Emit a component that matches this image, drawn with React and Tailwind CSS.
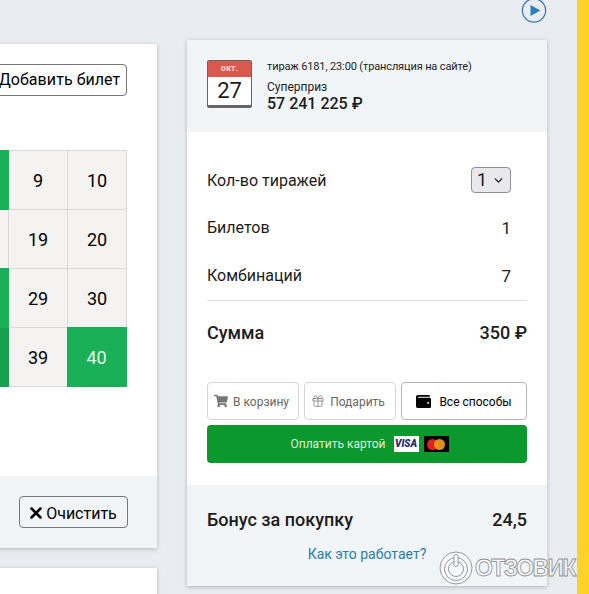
import { ChevronDown, Gift, X } from 'lucide-react';
import { FaShoppingCart, FaWallet } from 'react-icons/fa';

const rows = [
  [{ on: true }, { n: 9 }, { n: 10 }],
  [{}, { n: 19 }, { n: 20 }],
  [{ on: true }, { n: 29 }, { n: 30 }],
  [{ on: true, dark: true }, { n: 39 }, { n: 40, on: true }],
];

function Cell({ n, on, dark }) {
  let color = 'bg-[#f4f3f1] border-[#d9d9d9] text-black';
  if (on) color = '-mt-px -ml-px bg-[#19b057] border-[#19b057] text-[#e4f6ea]';
  if (dark) color = '-ml-px bg-[#17a04f] border-[#17a04f] text-[#e4f6ea]';
  return (
    <div className={`flex items-center justify-center border-r border-b pt-[2px] text-lg ${color}`}>{n}</div>
  );
}

function Row({ label, value, className }) {
  return (
    <div className={`flex items-center justify-between text-base ${className}`}>
      <span>{label}</span>
      <span className="pt-[1px] pr-[16px] text-[17px]">{value}</span>
    </div>
  );
}

function Logo() {
  return (
    <div className="absolute left-[439px] top-[551px] flex items-center">
      <svg width="34" height="34" viewBox="0 0 34 34" fill="none" stroke="#8f8f8f" strokeWidth="0.9">
        <circle cx="17" cy="17" r="16" fill="#ffffff" fillOpacity="0.35" />
        <circle cx="17" cy="18" r="11.5" />
        <circle cx="17" cy="18" r="7.5" />
        <rect x="15" y="3.5" width="4" height="12" rx="2" fill="#ffffff" />
      </svg>
      <span className="ml-[2px] font-['Liberation_Sans',sans-serif] text-[23px] font-bold leading-none tracking-[-1.6px] text-white/40 [-webkit-text-stroke:0.8px_#8f8f8f]">
        ОТЗОВИК
      </span>
    </div>
  );
}

export default function App() {
  return (
    <div className="relative flex h-[594px] w-[589px] overflow-hidden bg-[#e9edf1] font-['Roboto',sans-serif] text-[#1c1c1c]">
      {/* колонка с билетом */}
      <div className="ml-[-100px] flex w-[257px] shrink-0 flex-col pt-[44px]">
        <div className="flex h-[504px] shrink-0 flex-col bg-white shadow-[0_1px_4px_rgba(0,0,0,0.25)]">
          <div className="flex justify-end pr-[30px] pt-[20px]">
            <button className="h-[32px] w-[134px] rounded border border-[#777] bg-white pr-[1px] text-base tracking-[0.07px] whitespace-nowrap text-black">
              Добавить билет
            </button>
          </div>
          <div className="mt-[54px] flex justify-end pr-[30px]">
            <div className="grid grid-cols-[59px_59px_59px] grid-rows-[59px_59px_59px_59px] border-t border-l border-[#d9d9d9]">
              {rows.flat().map((c, i) => (
                <Cell key={i} {...c} />
              ))}
            </div>
          </div>
          <div className="mt-auto flex h-[72px] items-center justify-end bg-[#f1f5f8] pr-[29px]">
            <button className="flex h-[32px] w-[109px] items-center justify-center gap-[1px] rounded border border-[#777] pr-[3px] text-base text-black">
              <X size={18} strokeWidth={3.4} className="mt-[1px]" />
              <span className="pt-[4px]">Очистить</span>
            </button>
          </div>
        </div>
        <div className="mt-[20px] h-[60px] shrink-0 bg-white shadow-[0_1px_4px_rgba(0,0,0,0.25)]"></div>
      </div>

      {/* колонка с оплатой */}
      <div className="ml-[30px] flex w-[360px] shrink-0 flex-col">
        <svg className="-mt-[3px] mb-[17px] self-end" width="26" height="26" viewBox="0 0 26 26" fill="none">
          <circle cx="13" cy="13.5" r="11.6" stroke="#3f7ea6" strokeWidth="1.3" />
          <path d="M9.5 8 L19.5 13.5 L9.5 19 Z" fill="#2a7fc0" />
        </svg>
        <div className="flex h-[546px] flex-col bg-white shadow-[0_1px_4px_rgba(0,0,0,0.25)]">
          <div className="flex h-[92px] shrink-0 items-start gap-[15px] bg-[#f1f5f8] px-[20px] pt-[20px]">
            <div className="flex h-[48px] w-[45px] shrink-0 flex-col overflow-hidden rounded-[2px] border border-b-[3px] border-[#666] bg-white">
              <div className="flex h-[16px] items-center justify-center bg-[#d9594c] text-[9px] font-bold text-[#f6d6d2]">
                окт.
              </div>
              <div className="flex flex-1 items-center justify-center text-[22px] leading-none">27</div>
            </div>
            <div className="flex flex-col">
              <div className="text-[11px] leading-[14px] tracking-[-0.13px]">тираж 6181, 23:00 (трансляция на сайте)</div>
              <div className="mt-[6px] text-xs leading-[14px]">Суперприз</div>
              <div className="text-base leading-[20px] font-medium">57 241 225 ₽</div>
            </div>
          </div>

          <div className="flex flex-col px-[20px]">
            <div className="mt-[35px] flex items-center justify-between text-base">
              <span className="pt-[2px]">Кол-во тиражей</span>
              <button className="mr-[16px] flex h-[26px] w-[40px] items-center justify-center gap-[5px] rounded border border-[#8f8f9d] bg-[#e9e9ed] text-lg">
                1
                <ChevronDown size={13} strokeWidth={2.5} />
              </button>
            </div>
            <Row label="Билетов" value="1" className="mt-[22px] h-[26px]" />
            <Row label="Комбинаций" value="7" className="mt-[22px] h-[26px]" />
            <div className="mt-[11px] flex h-[65px] items-center justify-between border-t border-[#e0e0e0] text-lg font-medium">
              <span>Сумма</span>
              <span>350 ₽</span>
            </div>

            <div className="mt-[17px] flex gap-[5px]">
              <button className="flex h-[38px] w-[92px] items-center justify-center gap-[5px] rounded border border-[#d5d5d5] pr-[3px] text-xs text-[#666]">
                <FaShoppingCart size={14} className="text-[#777]" />
                <span className="pt-[1px]">В корзину</span>
              </button>
              <button className="flex h-[38px] w-[92px] items-center justify-center gap-[5px] rounded border border-[#d5d5d5] pr-[4px] text-xs text-[#666]">
                <Gift size={14} strokeWidth={1.3} className="text-[#777]" />
                <span className="pt-[1px]">Подарить</span>
              </button>
              <button className="flex h-[38px] w-[126px] items-center justify-center gap-[8px] rounded border border-[#b5b5b5] text-xs text-black">
                <FaWallet size={15} />
                <span className="pt-[1px]">Все способы</span>
              </button>
            </div>
            <button className="mt-[5px] flex h-[38px] items-center justify-center rounded bg-[#0b982c] pl-[5px] text-xs text-[#d8f2dd]">
              Оплатить картой
              <span className="ml-[8px] flex h-[16px] w-[25px] items-center justify-center bg-white text-[10px] font-black text-[#1a2a6c] italic">
                VISA
              </span>
              <span className="ml-[5px] flex h-[16px] w-[25px] items-center justify-center bg-black">
                <span className="h-[11px] w-[11px] rounded-full bg-[#e3201b]"></span>
                <span className="-ml-[4px] h-[11px] w-[11px] rounded-full bg-[#f59e20] opacity-90"></span>
              </span>
            </button>
          </div>

          <div className="mt-[22px] flex flex-1 flex-col bg-[#f1f5f8] px-[20px]">
            <div className="mt-[23px] flex items-center justify-between text-lg leading-[24px] font-medium">
              <span>Бонус за покупку</span>
              <span>24,5</span>
            </div>
            <div className="mt-[13px] text-center text-sm leading-[18px] text-[#2b7cab]">Как это работает?</div>
          </div>
        </div>
      </div>

      {/* жёлтая полоса справа */}
      <div className="ml-[30px] w-[12px] shrink-0 bg-[#fdd32a]"></div>

      <Logo />
    </div>
  );
}
